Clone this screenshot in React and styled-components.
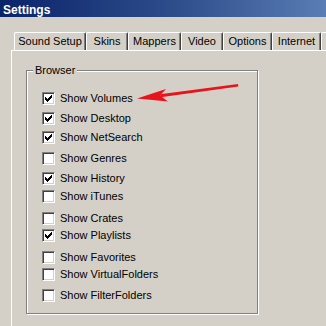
import React from "react";
import styled, { createGlobalStyle } from "styled-components";

const Global = createGlobalStyle`
  html, body { margin: 0; padding: 0; background: #d4d0c8; overflow: hidden; }
  body { font-family: "Liberation Sans", Arial, sans-serif; font-size: 11px; color: #000; }
`;

const Window = styled.div`
  position: relative;
  width: 326px;
  height: 326px;
  overflow: hidden;
  background: #d4d0c8;
  display: flex;
  flex-direction: column;
`;

const TitleBar = styled.div`
  height: 17px;
  box-sizing: border-box;
  padding: 3px 0 0 3px;
  line-height: 14px;
  background: linear-gradient(to right, #0a246a 0%, #2f4e8c 55%, #5a7db5 100%);
  color: #fff;
  font-weight: bold;
  font-size: 12px;
  flex: none;
`;

const Body = styled.div`
  flex: 1;
  padding: 15px 0 0 11px;
  display: flex;
  flex-direction: column;
`;

const TabStrip = styled.div`
  display: flex;
  height: 18px;
  padding-left: 3px;
  flex: none;
`;

const Tab = styled.div`
  flex: none;
  width: ${(p) => p.$w}px;
  box-sizing: border-box;
  height: 18px;
  border-top: 1px solid #fff;
  border-left: 1px solid #fff;
  border-right: 1px solid #404040;
  border-radius: 2px 2px 0 0;
  box-shadow: inset -1px 0 0 #808080;
  display: flex;
  align-items: center;
  justify-content: center;
  white-space: nowrap;
  padding-bottom: 1px;
`;

const Panel = styled.div`
  flex: 1;
  width: 330px;
  border-top: 1px solid #fff;
  border-left: 1px solid #fff;
  padding: 19px 0 0 14px;
`;

const GroupBox = styled.div`
  position: relative;
  width: 232px;
  height: 244px;
  box-sizing: border-box;
  border: 1px solid #808080;
  box-shadow: inset 1px 1px 0 #fff, 1px 1px 0 #fff;
  padding: 0 0 0 15px;
  display: flex;
  flex-direction: column;
`;

const Legend = styled.div`
  position: absolute;
  top: -8px;
  left: 6px;
  padding: 0 2px;
  background: #d4d0c8;
  line-height: 14px;
`;

const Row = styled.div`
  display: flex;
  align-items: center;
  gap: 5px;
  height: 13px;
  margin-top: ${(p) => p.$gap}px;
  white-space: nowrap;
`;

const Box = styled.div`
  width: 13px;
  height: 13px;
  flex: none;
  box-sizing: border-box;
  background: #fff;
  border-top: 1px solid #808080;
  border-left: 1px solid #808080;
  border-right: 1px solid #fff;
  border-bottom: 1px solid #fff;
  box-shadow: inset 1px 1px 0 #404040, inset -1px -1px 0 #d4d0c8;
  position: relative;
`;

const Check = styled.svg`
  position: absolute;
  left: -1px;
  top: -1px;
`;

const Label = styled.span`
  line-height: 13px;
`;

const Arrow = styled.svg`
  position: absolute;
  left: 0;
  top: 0;
  pointer-events: none;
`;

const tabs = [
  { t: "Sound Setup", w: 72 },
  { t: "Skins", w: 42 },
  { t: "Mappers", w: 53 },
  { t: "Video", w: 42 },
  { t: "Options", w: 49 },
  { t: "Internet", w: 49 },
  { t: "", w: 40 },
];

const items = [
  { t: "Show Volumes", c: true, top: 92 },
  { t: "Show Desktop", c: true, top: 112 },
  { t: "Show NetSearch", c: true, top: 131 },
  { t: "Show Genres", c: false, top: 152 },
  { t: "Show History", c: true, top: 172 },
  { t: "Show iTunes", c: false, top: 190 },
  { t: "Show Crates", c: false, top: 212 },
  { t: "Show Playlists", c: true, top: 229 },
  { t: "Show Favorites", c: false, top: 251 },
  { t: "Show VirtualFolders", c: false, top: 268 },
  { t: "Show FilterFolders", c: false, top: 289 },
];

const checkCols = [
  [3, 5], [4, 6], [5, 7], [6, 6], [7, 5], [8, 4], [9, 3],
];

function CheckMark() {
  return (
    <Check width="13" height="13" viewBox="0 0 13 13" shapeRendering="crispEdges">
      {checkCols.map(([x, y]) => (
        <rect key={x} x={x} y={y} width="1" height="3" fill="#000" />
      ))}
    </Check>
  );
}

export default function App() {
  let prev = 71 + 21 - 21; // first row offset computed below
  return (
    <>
      <Global />
      <Window>
        <TitleBar>Settings</TitleBar>
        <Body>
          <TabStrip>
            {tabs.map((tb, i) => (
              <Tab key={i} $w={tb.w}>{tb.t}</Tab>
            ))}
          </TabStrip>
          <Panel>
            <GroupBox>
              <Legend>Browser</Legend>
              {items.map((it, i) => {
                const gap = i === 0 ? it.top - 71 : it.top - items[i - 1].top - 13;
                return (
                  <Row key={it.t} $gap={gap}>
                    <Box>{it.c && <CheckMark />}</Box>
                    <Label>{it.t}</Label>
                  </Row>
                );
              })}
            </GroupBox>
          </Panel>
        </Body>
        <Arrow width="326" height="326" viewBox="0 0 326 326">
          <path d="M160,94.2 L238,84 L238.4,86.6 L160.6,97.2 Z" fill="#e8141c" />
          <path d="M137,98.5 L166,89 L160,95.5 L168,101.5 Z" fill="#e8141c" />
        </Arrow>
      </Window>
    </>
  );
}
